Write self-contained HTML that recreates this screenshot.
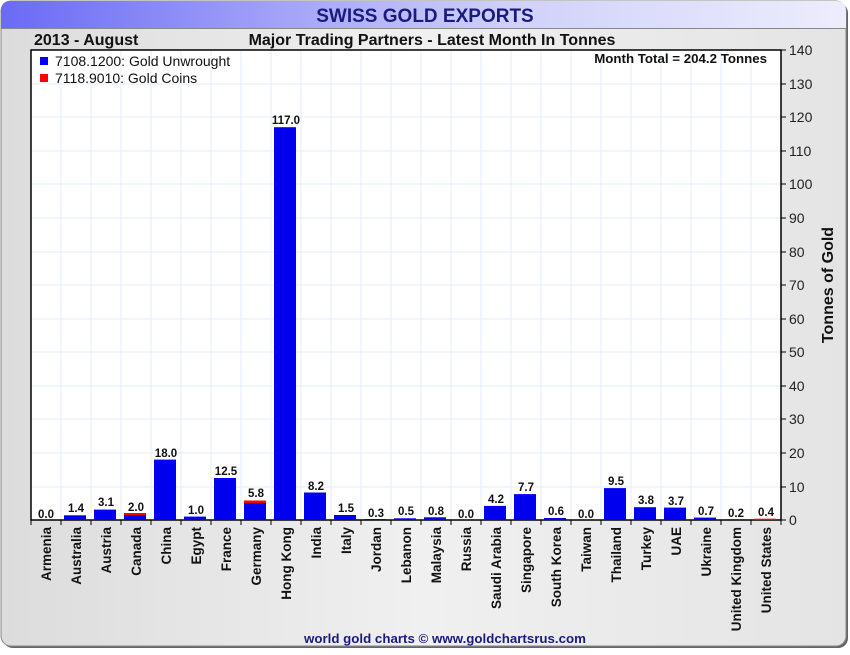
<!DOCTYPE html>
<html><head><meta charset="utf-8"><style>
body{margin:0;width:850px;height:650px;overflow:hidden;background:#fff;font-family:"Liberation Sans",Arial,sans-serif}
</style></head><body>
<svg width="850" height="650" xmlns="http://www.w3.org/2000/svg" font-family="Liberation Sans, Arial, sans-serif">
<defs>
<linearGradient id="hd" x1="0" x2="1"><stop offset="0" stop-color="#6a6af6"/><stop offset="0.6" stop-color="#d0d0fa"/><stop offset="1" stop-color="#ededfd"/></linearGradient>
<linearGradient id="bg" x1="0" x2="1"><stop offset="0" stop-color="#dcdcdc"/><stop offset="0.5" stop-color="#f0f0f0"/><stop offset="1" stop-color="#e4e4e4"/></linearGradient>
</defs>
<rect x="3" y="3" width="845" height="645" rx="10" fill="#666"/>
<rect x="1" y="1" width="845" height="645" rx="10" fill="url(#bg)" stroke="#888" stroke-width="1"/>
<path d="M1,28 L1,11 Q1,1 11,1 L836,1 Q846,1 846,11 L846,28 Z" fill="url(#hd)"/>
<line x1="1" y1="28.5" x2="846" y2="28.5" stroke="#888"/>
<text x="425" y="22" text-anchor="middle" font-size="19" font-weight="bold" fill="#1a1a80">SWISS GOLD EXPORTS</text>
<text x="34" y="45" font-size="16" font-weight="bold" fill="#111">2013 - August</text>
<text x="432" y="45" text-anchor="middle" font-size="16" font-weight="bold" fill="#111">Major Trading Partners - Latest Month In Tonnes</text>
<rect x="31" y="50" width="750" height="470" fill="#fff"/>
<g stroke="#e2eef8" stroke-width="1">
<path d="M61 50V520M91 50V520M121 50V520M151 50V520M181 50V520M211 50V520M241 50V520M271 50V520M301 50V520M331 50V520M361 50V520M391 50V520M421 50V520M451 50V520M481 50V520M511 50V520M541 50V520M571 50V520M601 50V520M631 50V520M661 50V520M691 50V520M721 50V520M751 50V520"/>
<path d="M31 84H781M31 117H781M31 151H781M31 184H781M31 218H781M31 252H781M31 285H781M31 319H781M31 352H781M31 386H781M31 419H781M31 453H781M31 487H781"/>
</g>
<rect x="31" y="50" width="750" height="470" fill="none" stroke="#000" stroke-width="1.5"/>
<rect x="40" y="57" width="8" height="8" fill="#0000ff"/>
<text x="55" y="66" font-size="14" fill="#111">7108.1200: Gold Unwrought</text>
<rect x="40" y="74" width="8" height="8" fill="#ff0000"/>
<text x="55" y="83" font-size="14" fill="#111">7118.9010: Gold Coins</text>
<text x="767" y="63" text-anchor="end" font-size="13.3" font-weight="bold" fill="#111">Month Total = 204.2 Tonnes</text>
<g fill="#0000ee">
<rect x="64" y="515.3" width="22" height="4.7"/>
<rect x="94" y="509.6" width="22" height="10.4"/>
<rect x="124" y="515" width="22" height="5"/>
<rect x="154" y="459.6" width="22" height="60.4"/>
<rect x="184" y="516.6" width="22" height="3.4"/>
<rect x="214" y="478" width="22" height="42"/>
<rect x="244" y="503" width="22" height="17"/>
<rect x="274" y="127.2" width="22" height="392.8"/>
<rect x="304" y="492.5" width="22" height="27.5"/>
<rect x="334" y="515" width="22" height="5"/>
<rect x="364" y="519" width="22" height="1"/>
<rect x="394" y="518.3" width="22" height="1.7"/>
<rect x="424" y="517.3" width="22" height="2.7"/>
<rect x="484" y="505.9" width="22" height="14.1"/>
<rect x="514" y="494.1" width="22" height="25.9"/>
<rect x="544" y="518" width="22" height="2"/>
<rect x="604" y="488.1" width="22" height="31.9"/>
<rect x="634" y="507.2" width="22" height="12.8"/>
<rect x="664" y="507.6" width="22" height="12.4"/>
<rect x="694" y="517.6" width="22" height="2.4"/>
<rect x="724" y="519.3" width="22" height="0.7"/>
</g>
<g fill="#ff0000">
<rect x="124" y="513" width="22" height="2"/>
<rect x="244" y="500.5" width="22" height="2.5"/>
<rect x="754" y="518.7" width="22" height="1.3"/>
</g>
<g font-size="11.5" font-weight="bold" fill="#111" text-anchor="middle">
<text x="46" y="518">0.0</text><text x="76" y="512">1.4</text><text x="106" y="506">3.1</text><text x="136" y="511">2.0</text>
<text x="166" y="457">18.0</text><text x="196" y="514">1.0</text><text x="226" y="475">12.5</text><text x="256" y="497">5.8</text>
<text x="286" y="124">117.0</text><text x="316" y="490">8.2</text><text x="346" y="512">1.5</text><text x="376" y="517">0.3</text>
<text x="406" y="515">0.5</text><text x="436" y="515">0.8</text><text x="466" y="518">0.0</text><text x="496" y="503">4.2</text>
<text x="526" y="491">7.7</text><text x="556" y="515">0.6</text><text x="586" y="518">0.0</text><text x="616" y="485">9.5</text>
<text x="646" y="504">3.8</text><text x="676" y="505">3.7</text><text x="706" y="515">0.7</text><text x="736" y="517">0.2</text><text x="766" y="516">0.4</text>
</g>
<g stroke="#000" stroke-width="1">
<path d="M31 520v5M61 520v5M91 520v5M121 520v5M151 520v5M181 520v5M211 520v5M241 520v5M271 520v5M301 520v5M331 520v5M361 520v5M391 520v5M421 520v5M451 520v5M481 520v5M511 520v5M541 520v5M571 520v5M601 520v5M631 520v5M661 520v5M691 520v5M721 520v5M751 520v5M781 520v5"/>
<path d="M781 50h5M781 84h5M781 117h5M781 151h5M781 184h5M781 218h5M781 252h5M781 285h5M781 319h5M781 352h5M781 386h5M781 419h5M781 453h5M781 487h5M781 520h5"/>
</g>
<g font-size="14" fill="#222">
<text x="789" y="55">140</text><text x="789" y="89">130</text><text x="789" y="122">120</text><text x="789" y="156">110</text>
<text x="789" y="189">100</text><text x="789" y="223">90</text><text x="789" y="257">80</text><text x="789" y="290">70</text>
<text x="789" y="324">60</text><text x="789" y="357">50</text><text x="789" y="391">40</text><text x="789" y="424">30</text>
<text x="789" y="458">20</text><text x="789" y="492">10</text><text x="789" y="525">0</text>
</g>
<text transform="translate(833,285) rotate(-90)" text-anchor="middle" font-size="16" font-weight="bold" fill="#111">Tonnes of Gold</text>
<g font-size="13.5" font-weight="bold" fill="#111" text-anchor="end">
<text transform="translate(51,527) rotate(-90)">Armenia</text>
<text transform="translate(81,527) rotate(-90)">Australia</text>
<text transform="translate(111,527) rotate(-90)">Austria</text>
<text transform="translate(141,527) rotate(-90)">Canada</text>
<text transform="translate(171,527) rotate(-90)">China</text>
<text transform="translate(201,527) rotate(-90)">Egypt</text>
<text transform="translate(231,527) rotate(-90)">France</text>
<text transform="translate(261,527) rotate(-90)">Germany</text>
<text transform="translate(291,527) rotate(-90)">Hong Kong</text>
<text transform="translate(321,527) rotate(-90)">India</text>
<text transform="translate(351,527) rotate(-90)">Italy</text>
<text transform="translate(381,527) rotate(-90)">Jordan</text>
<text transform="translate(411,527) rotate(-90)">Lebanon</text>
<text transform="translate(441,527) rotate(-90)">Malaysia</text>
<text transform="translate(471,527) rotate(-90)">Russia</text>
<text transform="translate(501,527) rotate(-90)">Saudi Arabia</text>
<text transform="translate(531,527) rotate(-90)">Singapore</text>
<text transform="translate(561,527) rotate(-90)">South Korea</text>
<text transform="translate(591,527) rotate(-90)">Taiwan</text>
<text transform="translate(621,527) rotate(-90)">Thailand</text>
<text transform="translate(651,527) rotate(-90)">Turkey</text>
<text transform="translate(681,527) rotate(-90)">UAE</text>
<text transform="translate(711,527) rotate(-90)">Ukraine</text>
<text transform="translate(741,527) rotate(-90)">United Kingdom</text>
<text transform="translate(771,527) rotate(-90)">United States</text>
</g>
<text x="445" y="643" text-anchor="middle" font-size="13.3" font-weight="bold" fill="#1a1a80">world gold charts © www.goldchartsrus.com</text>
</svg>
</body></html>
